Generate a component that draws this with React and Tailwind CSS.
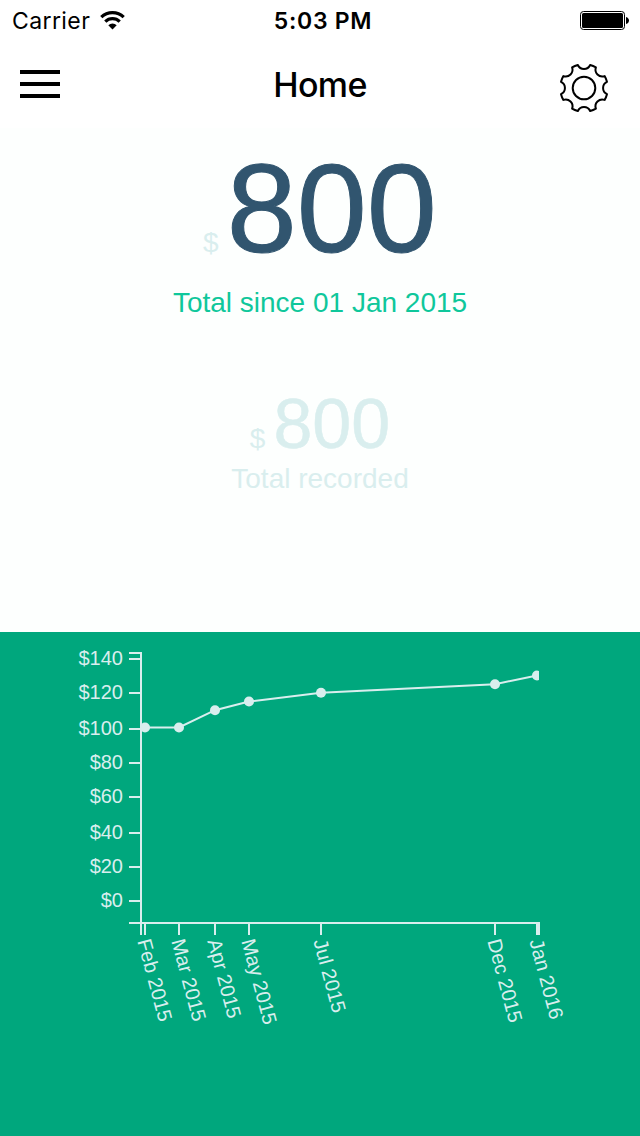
import React from "react";

const yTicks = [
  ["$140", 659], ["$120", 693], ["$100", 729], ["$80", 763],
  ["$60", 797], ["$40", 833], ["$20", 867], ["$0", 901],
];

const points = [
  { label: "Feb 2015", x: 145, y: 727.5 },
  { label: "Mar 2015", x: 179, y: 727.5 },
  { label: "Apr 2015", x: 215, y: 710.2 },
  { label: "May 2015", x: 249, y: 701.5 },
  { label: "Jul 2015", x: 321, y: 692.8 },
  { label: "Dec 2015", x: 495, y: 684.2 },
  { label: "Jan 2016", x: 537, y: 675.5 },
];

function gearPath() {
  const c = 24;
  const at = (r, deg) => {
    const a = (deg * Math.PI) / 180;
    return `${(c + r * Math.sin(a)).toFixed(2)} ${(c - r * Math.cos(a)).toFixed(2)}`;
  };
  let d = `M${at(23.8, -15)}`;
  for (let k = 0; k < 8; k++) {
    const a = k * 45;
    d += `A6.8 6.8 0 0 0 ${at(23.8, a + 15)}A23.8 23.8 0 0 1 ${at(23.8, a + 30)}`;
  }
  return d + "Z";
}

function StatusBar() {
  return (
    <div className="flex h-10 items-center justify-between pr-[11px] pl-3 font-[Inter,sans-serif] text-black">
      <div className="flex w-[202px] items-center gap-[10px]">
        <span className="pt-0.5 text-[23px] leading-9.5 tracking-[0.4px]">Carrier</span>
        <svg width="25" height="19" viewBox="0 0 25 19" fill="none" stroke="#000">
          <path d="M1.3 6.2a16 16 0 0 1 22.4 0" strokeWidth="3.2" />
          <path d="M5.3 10.6a10.3 10.3 0 0 1 14.4 0" strokeWidth="3.2" />
          <path d="M12.5 18.6 8.3 14.2a6 6 0 0 1 8.4 0z" fill="#000" stroke="none" />
        </svg>
      </div>
      <span className="pt-0.5 text-[23px] font-semibold leading-9.5 tracking-[0.7px]">5:03 PM</span>
      <div className="flex w-[197px] justify-end">
        <svg width="49" height="20" viewBox="0 0 49 20">
          <rect x="0.5" y="1.5" width="44" height="18" rx="3" fill="none" stroke="#000" />
          <rect x="2" y="3" width="41" height="15" rx="1.5" />
          <path d="M46 7c4 1 4 6 0 7z" />
        </svg>
      </div>
    </div>
  );
}

function Header() {
  return (
    <header className="flex h-[88px] items-center justify-between px-5 font-[Inter,sans-serif]">
      <div className="flex w-15 flex-col gap-2">
        <span className="h-1 w-10 bg-black" />
        <span className="h-1 w-10 bg-black" />
        <span className="h-1 w-10 bg-black" />
      </div>
      <h1 className="pt-px text-[34px] font-[550] leading-[86px] tracking-[-0.6px] text-black">Home</h1>
      <svg className="mt-2 mr-3 overflow-visible" width="48" height="48" viewBox="0 0 48 48" fill="none" stroke="#000" strokeWidth="2">
        <path d={gearPath()} strokeLinejoin="round" />
        <circle cx="24" cy="24" r="11.3" />
      </svg>
    </header>
  );
}

function Chart() {
  return (
    <svg className="block" width="640" height="504" viewBox="0 632 640 504" fontFamily="'Liberation Sans', Arial, sans-serif" fontSize="20" fill="#d9eeee">
      <clipPath id="plot">
        <rect x="141" y="652" width="398" height="271" />
      </clipPath>
      <g stroke="#d9eeee" strokeWidth="2" fill="none">
        <path d="M129 653H141V923" />
        <path d="M141 935V923M129 923H539V935" />
        {yTicks.map(([t, y]) => <path key={t} d={`M129 ${y}H141`} />)}
        {points.map((p) => <path key={p.label} d={`M${p.x} 923V935`} />)}
      </g>
      <g clipPath="url(#plot)">
        <polyline points={points.map((p) => `${p.x},${p.y}`).join(" ")} fill="none" stroke="#d9eeee" strokeWidth="2" />
        {points.map((p) => <circle key={p.label} cx={p.x} cy={p.y} r="5" />)}
      </g>
      {yTicks.map(([t, y]) => <text key={t} x="123" y={y + 6} textAnchor="end">{t}</text>)}
      {points.map((p) => (
        <text key={p.label} transform={`translate(${p.x - 7.8} 941) rotate(75)`}>{p.label}</text>
      ))}
    </svg>
  );
}

export default function App() {
  return (
    <div className="flex h-[1136px] w-[640px] flex-col overflow-hidden bg-white font-['Liberation_Sans',Arial,sans-serif]">
      <StatusBar />
      <Header />
      <main className="flex h-[504px] flex-col items-center bg-[#fdfffe]">
        <div className="mt-[11px] flex h-[146px] items-baseline gap-2 leading-[140px]">
          <span className="text-[28px] text-[#d9eeee]">$</span>
          <span className="text-[126px] text-[#31556f] [-webkit-text-stroke:1px_#31556f]">800</span>
        </div>
        <p className="text-[28px] leading-9 text-[#0fc79b]">Total since 01 Jan 2015</p>
        <div className="mt-[63px] flex h-[77px] items-baseline gap-2 leading-20 text-[#d9eeee]">
          <span className="text-[28px]">$</span>
          <span className="text-[70px] [-webkit-text-stroke:0.5px_#d9eeee]">800</span>
        </div>
        <p className="text-[28px] leading-9 text-[#d9eeee]">Total recorded</p>
      </main>
      <section className="h-[504px] bg-[#00a77d]">
        <Chart />
      </section>
    </div>
  );
}
